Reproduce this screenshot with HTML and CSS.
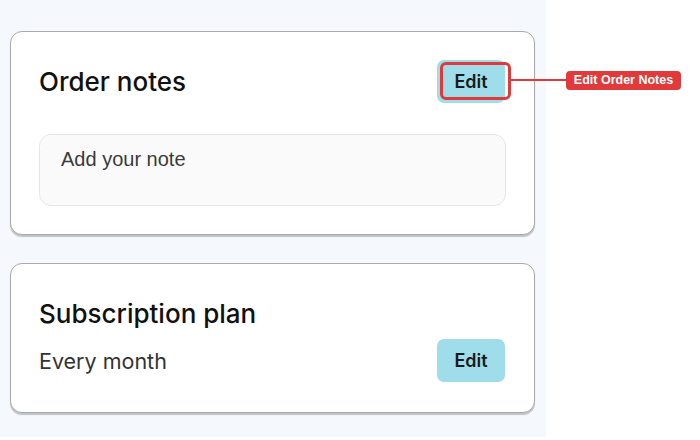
FILE: index.html
```html
<!DOCTYPE html>
<html lang="en">
<head>
    <meta charset="UTF-8">
    <meta name="viewport" content="width=device-width, initial-scale=1.0">
    <title>Order settings</title>
    <link rel="stylesheet" href="styles.css">
</head>
<body>
    <div class="panel">
        <div class="card">
            <div class="card-head">
                <h2>Order notes</h2>
                <button class="edit-btn">Edit</button>
            </div>
            <div class="note-box">Add your note</div>
        </div>

        <div class="card card-plan">
            <h2>Subscription plan</h2>
            <div class="plan-row">
                <span class="plan-value">Every month</span>
                <button class="edit-btn">Edit</button>
            </div>
        </div>
    </div>

    <!-- annotation -->
    <div class="callout-box"></div>
    <div class="callout-line"></div>
    <div class="callout-label">Edit Order Notes</div>
</body>
</html>
```

FILE: styles.css
```css
body {
    margin: 0;
    padding: 0;
    background-color: #fff;
    font-family: 'Inter', 'Noto Sans', sans-serif;
    color: #111;
}
.panel {
    width: 526px;
    height: 406px;
    padding: 31px 10px 0 10px;
    background-color: #f5f9fd;
    display: flex;
    flex-direction: column;
    gap: 28px;
}
.card {
    background-color: #fff;
    border: 1px solid #a9a9a9;
    border-radius: 12px;
    box-shadow: 0 2px 1px rgba(0, 0, 0, 0.22);
    padding: 28px;
    width: 467px;
}
.card h2 {
    margin: 0;
    font-size: 26px;
    font-weight: 500;
    line-height: 30px;
    color: #111;
}
.card-head {
    display: flex;
    justify-content: space-between;
    align-items: center;
}
.edit-btn {
    background-color: #a0ddeb;
    border: none;
    border-radius: 7px;
    width: 68px;
    height: 43px;
    font-family: 'Inter', sans-serif;
    font-size: 18px;
    font-weight: 600;
    color: #1a1a1a;
    cursor: pointer;
    margin-right: 1px;
}
.note-box {
    margin-top: 31px;
    height: 70px;
    background-color: #fafafa;
    border: 1px solid #e6e6e6;
    border-radius: 12px;
    padding: 0 21px;
    font-family: 'Liberation Sans', Arial, sans-serif;
    font-size: 20px;
    line-height: 48px;
    color: #3a3a3a;
}
.card-plan {
    padding-top: 35px;
    padding-bottom: 30px;
}
.plan-row {
    margin-top: 10px;
    display: flex;
    justify-content: space-between;
    align-items: center;
}
.plan-value {
    font-size: 21.5px;
    color: #333;
}
.callout-box {
    position: absolute;
    left: 440px;
    top: 62px;
    width: 65px;
    height: 32px;
    border: 3px solid #e03a3a;
    border-radius: 6px;
}
.callout-line {
    position: absolute;
    left: 511px;
    top: 79px;
    width: 56px;
    height: 2px;
    background-color: #e03a3a;
}
.callout-label {
    position: absolute;
    left: 566px;
    top: 71px;
    width: 115px;
    height: 19px;
    background-color: #e03a3a;
    border-radius: 4px;
    color: #fff;
    font-family: 'Liberation Sans', Arial, sans-serif;
    font-size: 12.5px;
    font-weight: bold;
    line-height: 19px;
    text-align: center;
}
```
